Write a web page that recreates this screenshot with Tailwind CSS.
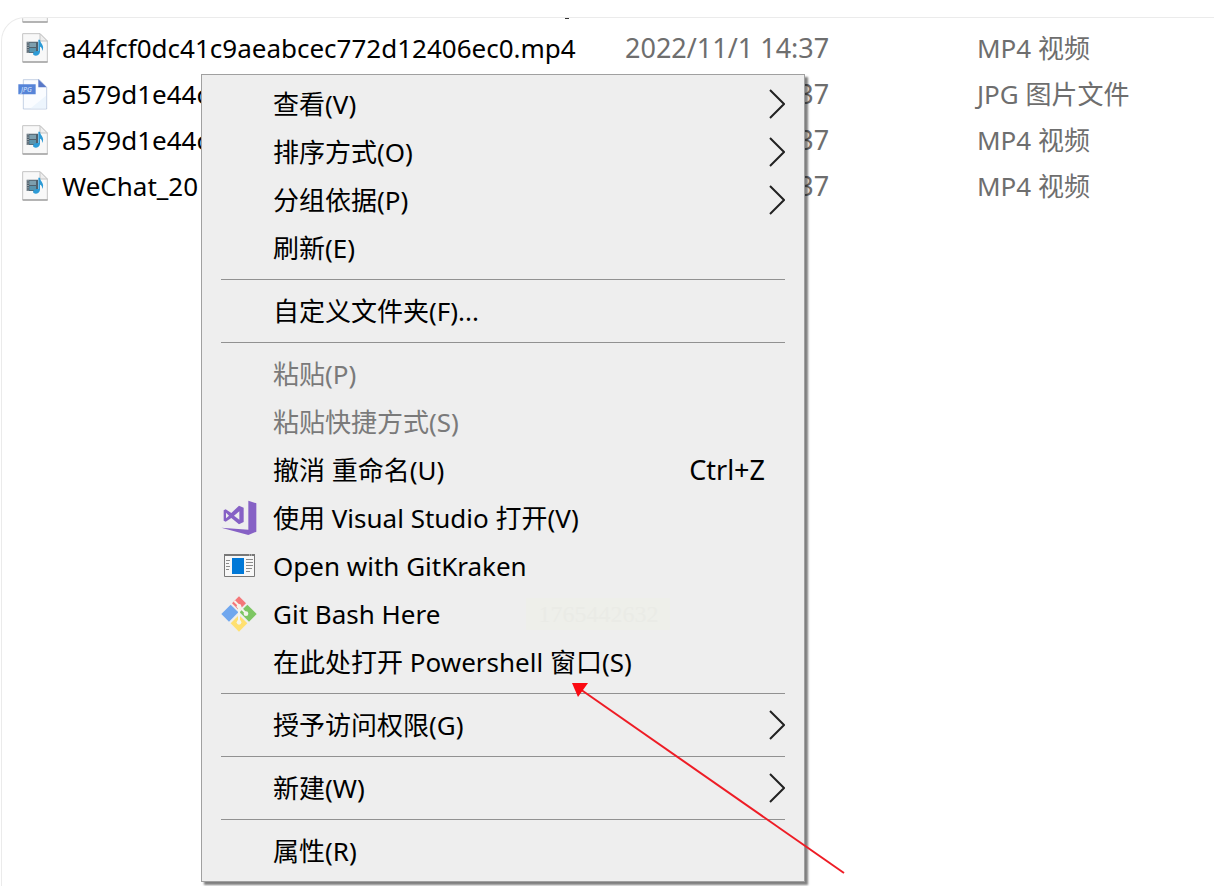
<!DOCTYPE html>
<html lang="zh-CN">
<head>
  <meta charset="UTF-8" />
  <meta name="viewport" content="width=device-width, initial-scale=1.0" />
  <title>文件资源管理器</title>

  <!-- Tailwind CSS -->
  <script src="https://cdn.jsdelivr.net/npm/@tailwindcss/browser@4"></script>
</head>
<body class="bg-white text-black font-['Noto_Sans','Noto_Sans_CJK_SC',sans-serif] text-[26px] leading-9">

  <!-- Shared icons -->
  <svg class="hidden">
    <symbol id="video" viewBox="0 0 78 90">
      <path d="M2 2H54L76 24V87H2Z" fill="#f8f8f8" stroke="#c4c4c4" stroke-width="3" />
      <path d="M2 87H77" stroke="#a5a5a5" stroke-width="4" />
      <path d="M54 2V24H76Z" fill="#eee" stroke="#c4c4c4" stroke-width="3" />
      <path d="M14 26H48V60H14Z" fill="#50606c" />
      <path d="M22 29H42V42H22Z" fill="#7d9fae" />
      <path d="M22 45H42V58H22Z" fill="#5a94ad" />
      <path d="M18 28V60" stroke="#d6dcdd" stroke-width="3" stroke-dasharray="3 4" />
      <path d="M49 20H54C55 32 69 37 61 54C61 44 56 41 54 41V57C53 66 43 70 36 67C29 62 36 52 49 54Z" fill="#2d9bd6" />
    </symbol>
    <symbol id="arrow" viewBox="0 0 16 30">
      <path d="M1 1L15 15L1 29" fill="none" stroke="#222" stroke-width="2" />
    </symbol>
  </svg>

  <main class="relative mt-[17px] ml-px min-h-[calc(100vh-17px)] overflow-hidden rounded-tl-3xl border-t border-l border-[#ebebeb]">

    <!-- File list -->
    <table class="-mt-[39px] w-full table-fixed text-left whitespace-nowrap">
      <colgroup>
        <col class="w-[623px]" />
        <col class="w-[352px]" />
        <col />
      </colgroup>
      <tbody class="text-[#6e6e6e]">
        <tr class="h-[46px]">
          <td class="p-0"><div class="flex items-center pt-3 pl-5"><svg class="h-[30px] w-[26px]"><use href="#video" /></svg></div></td>
          <td></td>
          <td></td>
        </tr>
        <tr class="h-[46px]">
          <td class="p-0"><div class="flex items-center gap-[14px] pl-5 text-black"><svg class="h-[30px] w-[26px]"><use href="#video" /></svg><span>a44fcf0dc41c9aeabcec772d12406ec0.mp4</span></div></td>
          <td class="p-0 text-[27px]">2022/11/1 14:37</td>
          <td class="p-0">MP4 视频</td>
        </tr>
        <tr class="h-[46px]">
          <td class="p-0">
            <div class="flex items-center gap-[14px] pl-4 text-black">
              <svg class="h-[31px] w-[30px]" viewBox="0 0 90 93">
                <path d="M16 2H64L86 25V90H16Z" fill="#fafcff" stroke="#a9bbd8" stroke-width="2" />
                <path d="M38 88L84 50V88Z" fill="#edf5fd" />
                <path d="M61 1V25H86Z" fill="#5878c8" />
                <path d="M1 16H53V46H1Z" fill="#5684d8" />
                <text x="9" y="39" fill="#dce8ff" font-size="21" font-style="italic">JPG</text>
              </svg>
              <span>a579d1e44c</span>
            </div>
          </td>
          <td class="p-0 text-[27px]">2022/11/1 14:37</td>
          <td class="p-0">JPG 图片文件</td>
        </tr>
        <tr class="h-[46px]">
          <td class="p-0"><div class="flex items-center gap-[14px] pl-5 text-black"><svg class="h-[30px] w-[26px]"><use href="#video" /></svg><span>a579d1e44c</span></div></td>
          <td class="p-0 text-[27px]">2022/11/1 14:37</td>
          <td class="p-0">MP4 视频</td>
        </tr>
        <tr class="h-[46px]">
          <td class="p-0"><div class="flex items-center gap-[14px] pl-5 text-black"><svg class="h-[30px] w-[26px]"><use href="#video" /></svg><span>WeChat_20</span></div></td>
          <td class="p-0 text-[27px]">2022/11/1 14:37</td>
          <td class="p-0">MP4 视频</td>
        </tr>
      </tbody>
    </table>
    <div class="absolute top-0 left-[563px] h-px w-1 bg-[#333]"></div>

    <!-- Context menu -->
    <div role="menu" class="absolute top-[56px] left-[199px] w-[604px] border border-[#a0a0a0] bg-[#eeeeee] px-[19px] pt-[5px] pb-[6px] shadow-[3px_3px_2px_rgba(0,0,0,0.5)]">
      <button role="menuitem" class="flex h-12 w-full items-center justify-between pl-[52px]">查看(V)<svg class="h-[30px] w-4"><use href="#arrow" /></svg></button>
      <button role="menuitem" class="flex h-12 w-full items-center justify-between pl-[52px]">排序方式(O)<svg class="h-[30px] w-4"><use href="#arrow" /></svg></button>
      <button role="menuitem" class="flex h-12 w-full items-center justify-between pl-[52px]">分组依据(P)<svg class="h-[30px] w-4"><use href="#arrow" /></svg></button>
      <button role="menuitem" class="flex h-12 w-full items-center pl-[52px]">刷新(E)</button>
      <hr class="my-[7px] border-[#919191]" />
      <button role="menuitem" class="flex h-12 w-full items-center pl-[52px]">自定义文件夹(F)...</button>
      <hr class="my-[7px] border-[#919191]" />
      <button role="menuitem" disabled class="flex h-12 w-full items-center pl-[52px] text-[#7a7a7a]">粘贴(P)</button>
      <button role="menuitem" disabled class="flex h-12 w-full items-center pl-[52px] text-[#7a7a7a]">粘贴快捷方式(S)</button>
      <button role="menuitem" class="flex h-12 w-full items-center justify-between pr-5 pl-[52px]">撤消 重命名(U)<span class="text-[27px]">Ctrl+Z</span></button>
      <button role="menuitem" class="flex h-12 w-full items-center gap-4">
        <svg class="h-9 w-9" viewBox="0 0 108 108" fill="#8661c5">
          <path d="M82 2L106 10V95L82 105L1 83L82 89Z" />
          <path fill-rule="evenodd" d="M8 31L14 28L31 39L54 17L68 23V66L54 73L31 54L14 65L8 62ZM15 38V55L24 47ZM55 34L39 47L55 59Z" />
        </svg>
        使用 Visual Studio 打开(V)
      </button>
      <button role="menuitem" class="flex h-12 w-full items-center gap-4">
        <svg class="h-9 w-9" viewBox="0 0 36 36">
          <path d="M3.500 6.500H33.500V28.500H3.500Z" fill="#f7f7f7" stroke="#777" />
          <path d="M3 7H34" stroke="#777" stroke-width="2" />
          <path d="M28 7H32" stroke="#ddd" stroke-dasharray="1 1" />
          <path d="M11 10H23V26H11Z" fill="#0078d7" />
          <path d="M5 12.500H9M5 15.500H8M5 18.500H9M5 21.500H8M25 11.500H32M25 14.500H32M25 17.500H32M25 20.500H31M25 23.500H29" stroke="#8b8b8b" />
        </svg>
        Open with GitKraken
      </button>
      <button role="menuitem" class="flex h-12 w-full items-center gap-4">
        <svg class="h-9 w-9" viewBox="0 0 108 108">
          <path d="M54 1L75 22L54 43L33 22Z" fill="#f47779" />
          <path d="M29 26L52 49L24 77L1 54Z" fill="#70a7ee" />
          <path d="M79 26L107 54L84 77L56 49Z" fill="#7dc663" />
          <path d="M54 57L79 82L54 107L29 82Z" fill="#ffe070" />
          <path d="M40 15L54 29V80M54 30L75 52" fill="none" stroke="#f4f4ec" stroke-width="6" />
          <circle cx="54" cy="31" r="7" fill="#f4f4ec" />
          <circle cx="54" cy="79" r="7" fill="#f4f4ec" />
          <circle cx="75" cy="53" r="7" fill="#f4f4ec" />
        </svg>
        Git Bash Here
        <span class="ml-[70px] bg-[#eeefea] px-3 font-['Liberation_Serif',serif] text-2xl text-[#eaebe6]">1765442632</span>
      </button>
      <button role="menuitem" class="flex h-12 w-full items-center pl-[52px]">在此处打开 Powershell 窗口(S)</button>
      <hr class="my-[7px] border-[#919191]" />
      <button role="menuitem" class="flex h-12 w-full items-center justify-between pl-[52px]">授予访问权限(G)<svg class="h-[30px] w-4"><use href="#arrow" /></svg></button>
      <hr class="my-[7px] border-[#919191]" />
      <button role="menuitem" class="flex h-12 w-full items-center justify-between pl-[52px]">新建(W)<svg class="h-[30px] w-4"><use href="#arrow" /></svg></button>
      <hr class="my-[7px] border-[#919191]" />
      <button role="menuitem" class="flex h-12 w-full items-center pl-[52px]">属性(R)</button>
    </div>

    <!-- Red pointer -->
    <svg class="absolute top-[665px] left-[570px] h-[192px] w-[274px]" viewBox="0 0 274 192">
      <path d="M8 6L272 190" stroke="#ee1c25" stroke-width="2" />
      <path d="M0 0H16L6 14Z" fill="#fb0a12" />
    </svg>
  </main>

</body>
</html>
